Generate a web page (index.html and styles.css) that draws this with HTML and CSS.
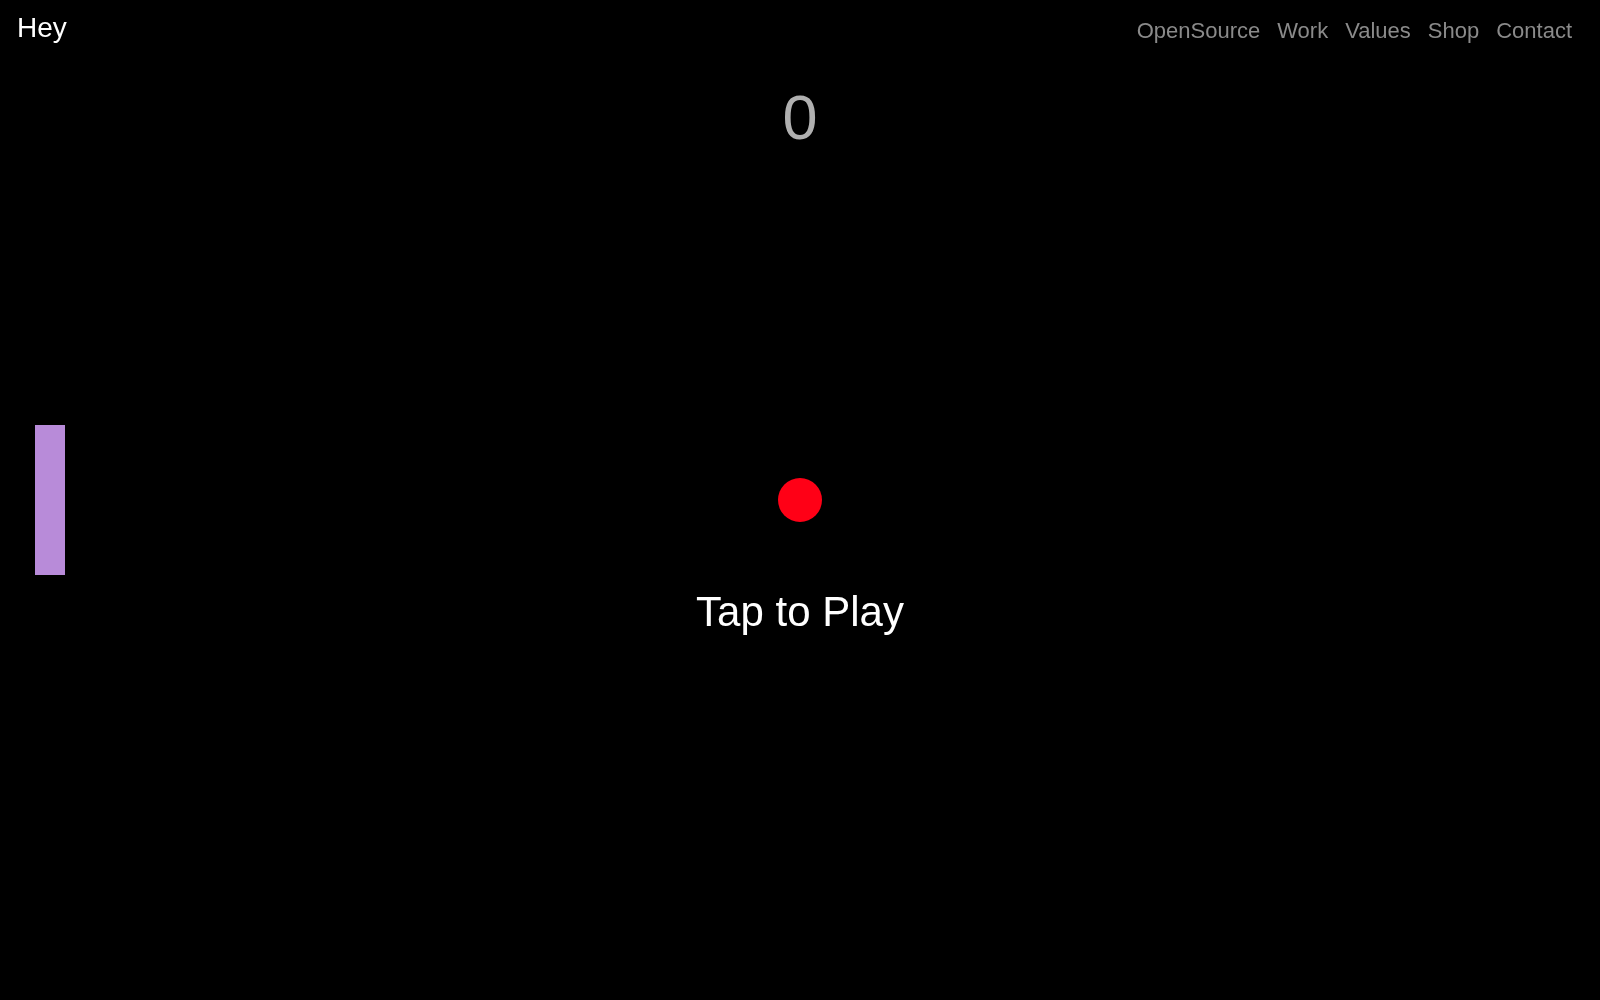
FILE: index.html
```html
<!DOCTYPE html>
<html lang="en">
<head>
  <meta charset="UTF-8">
  <meta name="viewport" content="width=device-width, initial-scale=1.0">
  <title>Hey</title>
  <link rel="stylesheet" href="styles.css">
</head>
<body>
  <!-- Pong stage -->
  <div class="stage" id="stage">
    <div class="score" id="score">0</div>
    <div class="paddle" id="paddle"></div>
    <div class="ball" id="ball"></div>
    <div class="prompt" id="prompt">Tap to Play</div>
  </div>

  <!-- Top bar -->
  <header class="top-bar">
    <a class="brand" href="#">Hey</a>
    <nav class="nav">
      <a href="#">OpenSource</a>
      <a href="#">Work</a>
      <a href="#">Values</a>
      <a href="#">Shop</a>
      <a href="#">Contact</a>
    </nav>
  </header>
</body>
</html>
```

FILE: styles.css
```css
html, body {
  margin: 0;
  padding: 0;
  height: 100%;
  background-color: #000;
  font-family: "Liberation Sans", Arial, sans-serif;
  overflow: hidden;
}

a {
  text-decoration: none;
}

.top-bar {
  position: relative;
  display: flex;
  justify-content: space-between;
  align-items: flex-start;
  padding: 14px 28px 0 17px;
}

.brand {
  color: #fff;
  font-size: 28px;
  line-height: 28px;
}

.nav {
  display: flex;
  gap: 17px;
  margin-top: 6px;
}

.nav a {
  color: #8a8a8a;
  font-size: 22px;
  line-height: 22px;
}

/* game canvas: children are placed on the board */
.stage {
  position: fixed;
  top: 0;
  left: 0;
  right: 0;
  bottom: 0;
}

.score {
  position: absolute;
  top: 86px;
  left: 0;
  right: 0;
  text-align: center;
  color: #b0b0b0;
  font-size: 63px;
  line-height: 63px;
}

.paddle {
  position: absolute;
  left: 35px;
  top: 425px;
  width: 30px;
  height: 150px;
  background-color: #b88bd9;
}

.ball {
  position: absolute;
  left: 778px;
  top: 478px;
  width: 44px;
  height: 44px;
  border-radius: 50%;
  background-color: #ff0016;
}

.prompt {
  position: absolute;
  top: 591px;
  left: 0;
  right: 0;
  text-align: center;
  color: #fff;
  font-size: 42px;
  line-height: 42px;
}
```
